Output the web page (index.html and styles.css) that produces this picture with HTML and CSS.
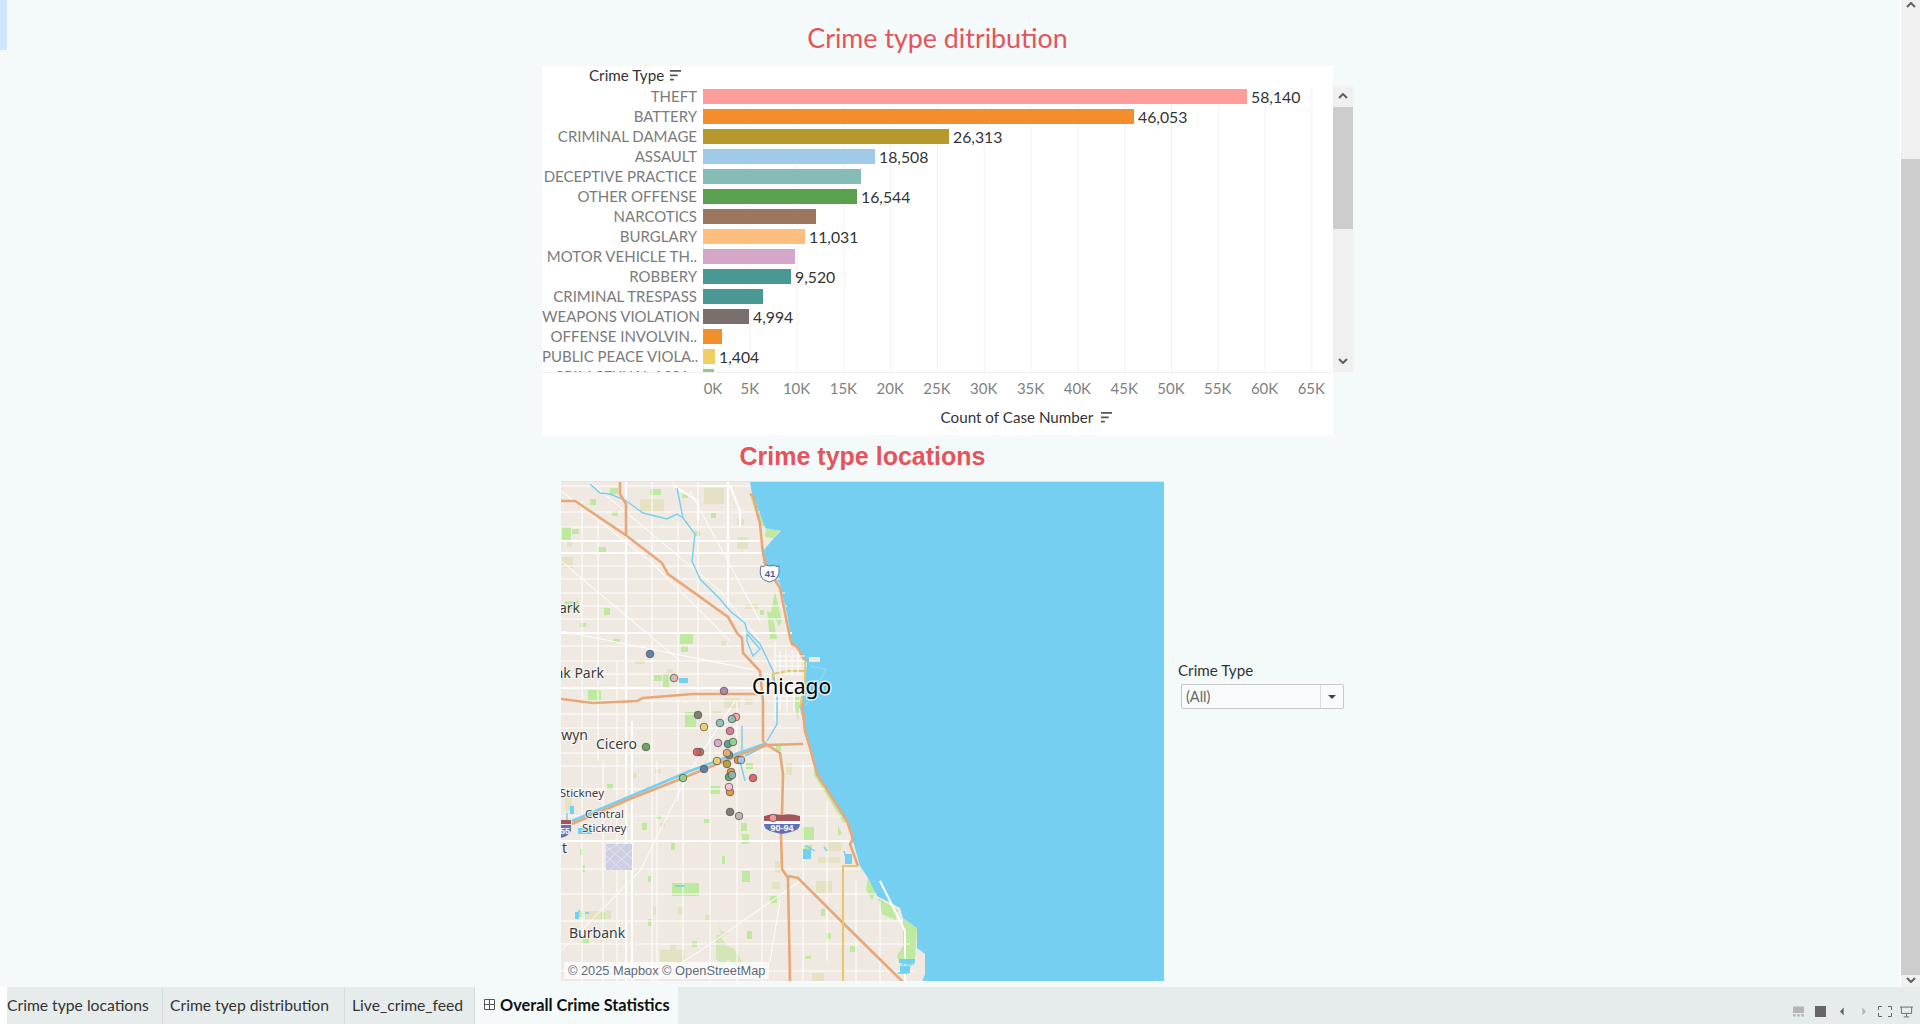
FILE: index.html
```html
<!DOCTYPE html>
<html lang="en">
<head>
<meta charset="utf-8">
<title>Overall Crime Statistics</title>
<link rel="stylesheet" href="styles.css">
</head>
<body>
<div class="main">
  <div class="content">
    <div class="accent"></div>
    <section class="chart-section">
      <h2 class="title-chart">Crime type ditribution</h2>
      <div class="chart-wrap">
        <div class="panel">
          <div class="head"><span>Crime Type</span><svg class="sort" viewBox="0 0 10 10"><path d="M0 0h10v1.6H0zM0 4h7v1.6H0zM0 8h3.5v1.6H0z"/></svg></div>
          <div class="plot">
            <div class="row"><span class="lbl">THEFT</span><span class="bar c1" style="width:544px"></span><span class="val">58,140</span></div>
            <div class="row"><span class="lbl">BATTERY</span><span class="bar c2" style="width:431px"></span><span class="val">46,053</span></div>
            <div class="row"><span class="lbl">CRIMINAL DAMAGE</span><span class="bar c3" style="width:246px"></span><span class="val">26,313</span></div>
            <div class="row"><span class="lbl">ASSAULT</span><span class="bar c4" style="width:172px"></span><span class="val">18,508</span></div>
            <div class="row"><span class="lbl">DECEPTIVE PRACTICE</span><span class="bar c5" style="width:158px"></span></div>
            <div class="row"><span class="lbl">OTHER OFFENSE</span><span class="bar c6" style="width:154px"></span><span class="val">16,544</span></div>
            <div class="row"><span class="lbl">NARCOTICS</span><span class="bar c7" style="width:113px"></span></div>
            <div class="row"><span class="lbl">BURGLARY</span><span class="bar c8" style="width:102px"></span><span class="val">11,031</span></div>
            <div class="row"><span class="lbl">MOTOR VEHICLE TH..</span><span class="bar c9" style="width:92px"></span></div>
            <div class="row"><span class="lbl">ROBBERY</span><span class="bar c10" style="width:88px"></span><span class="val">9,520</span></div>
            <div class="row"><span class="lbl">CRIMINAL TRESPASS</span><span class="bar c10" style="width:60px"></span></div>
            <div class="row"><span class="lbl">WEAPONS VIOLATION</span><span class="bar c11" style="width:46px"></span><span class="val">4,994</span></div>
            <div class="row"><span class="lbl">OFFENSE INVOLVIN..</span><span class="bar c2" style="width:19px"></span></div>
            <div class="row"><span class="lbl">PUBLIC PEACE VIOLA..</span><span class="bar c12" style="width:12px"></span><span class="val">1,404</span></div>
            <div class="row"><span class="lbl">CRIM SEXUAL ASSA..</span><span class="bar c13" style="width:11px"></span></div>
          </div>
          <div class="axis">
            <span class="tick tick-first">0K</span><span class="tick">5K</span><span class="tick">10K</span><span class="tick">15K</span><span class="tick">20K</span><span class="tick">25K</span><span class="tick">30K</span><span class="tick">35K</span><span class="tick">40K</span><span class="tick">45K</span><span class="tick">50K</span><span class="tick">55K</span><span class="tick">60K</span><span class="tick">65K</span>
          </div>
          <div class="axis-title"><span>Count of Case Number</span><svg class="sort" viewBox="0 0 10 10"><path d="M0 0h10v1.6H0zM0 4h7v1.6H0zM0 8h3.5v1.6H0z"/></svg></div>
        </div>
        <div class="vscroll">
          <svg class="chev" viewBox="0 0 10 6"><path d="M1 5l4-4 4 4"/></svg>
          <div class="vthumb"></div>
          <div class="vspace"></div>
          <svg class="chev" viewBox="0 0 10 6"><path d="M1 1l4 4 4-4"/></svg>
        </div>
      </div>
    </section>
    <section class="map-section">
      <div class="map-col">
        <h2 class="title-map">Crime type locations</h2>
        <div class="map">
          <svg class="map-svg" viewBox="561 481 603 500">
            <rect class="land" x="561" y="481" width="603" height="500"/>
            <g class="park">
              <path d="M562 526h9v13h-9zM572 528h7v5h-7zM598 546h8v7h-8zM612 510h6v5h-6zM565 600h14v8h-14zM604 607h6v7h-6zM580 622h6v4h-6zM613 638h7v4h-7zM680 632h13v11h-13zM681 645h7v6h-7zM588 689h13v11h-13zM663 672h6v14h-6zM685 711h11v15h-11zM650 488h11v6h-11zM610 487h8v6h-8zM695 530h5v5h-5zM711 512h5v5h-5zM590 498h6v6h-6zM654 674h8v6h-8zM682 493h6v4h-6zM760 609h4v5h-4zM770 612h5v5h-5z"/>
              <path d="M752 493l8 20 5 14-3 0-6-14-6-18zM766 527l14 3-7 7-8-1zM775 590l7 30-3 5-8-14zM767 610l5 2 5 26h-7zM795 690l5 2-2 28-3-14zM805 708l5 2 5 26-7-10zM815 760l32 60-3 2-30-48zM868 877l8 14-4 8-6-10zM903 917l14 10-2 30-10 20-8-22 6-10zM878 897l20 12-2 10-14-6zM838 825l4 8-4 2z"/>
              <path d="M656 814h5v4h-5zM642 822h5v7h-5zM580 788h7v7h-7zM607 783h6v6h-6zM741 822h6v8h-6zM776 745h5v5h-5zM746 762h7v6h-7zM710 785h10v8h-10zM704 818h6v4h-6zM742 833h7v10h-7zM671 842h4v7h-4zM580 848h3v6h-3zM582 864h3v7h-3zM648 875h3v6h-3zM722 855h3v8h-3zM742 870h8v11h-8zM802 826h12v14h-12zM804 844h8v5h-8zM672 882h27v13h-27zM770 895h7v7h-7zM821 908h4v7h-4zM826 932h5v6h-5zM805 955h6v3h-6zM578 910h5v6h-5zM601 911h4v7h-4zM648 918h4v7h-4zM581 937h8v5h-8zM747 930h5v8h-5zM692 940h5v6h-5zM850 945h5v6h-5zM878 843h8v24h-8z"/>
            </g>
            <path class="park-light" d="M718 922l3 8 8 2-8 4 5 8 8 4 8 12-6 6-8-8-5 8-7-8v-24h5z"/>
            <g class="tan">
              <path d="M640 498h24v14h-24zM704 487h20v16h-20zM737 536h11v12h-11zM737 518h7v6h-7zM745 603h13v5h-13zM562 556h11v11h-11zM567 541h5v5h-5zM721 640h5v5h-5zM635 659h10v4h-10zM667 668h6v4h-6zM724 697h16v10h-16zM745 698h8v6h-8zM712 710h9v4h-9zM633 772h4v5h-4zM655 768h6v4h-6zM786 762h6v12h-6zM565 796h7v14h-7zM660 822h5v4h-5zM775 860h5v12h-5zM772 881h8v7h-8zM816 880h16v12h-16zM825 840h16v10h-16zM818 856h22v6h-22zM585 910h16v8h-16zM605 910h6v8h-6zM653 906h4v8h-4zM678 906h4v8h-4zM705 914h6v6h-6zM670 944h6v6h-6zM812 972h12v9h-12zM660 949h25v12h-25z"/>
            </g>
            <path class="lake" d="M750 481L752 493L760 513L765 527L781 530L773 538L763 550L763 562L780 583L787 613L792 643L798 647L807 662L805 680L800 707L803 720L810 747L817 773L847 820L853 840L860 865L868 877L877 895L900 907L903 917L917 927L917 947L925 953L925 973L922 981L1164 981L1164 481Z"/>
            <g class="road-w">
              <path d="M561 485H750M561 511H760M561 526H765M561 565H770M561 578H780M561 592H785M561 605H787M561 618H788M561 645H790M561 660H805M561 673H805M561 700H790M561 713H800M561 727H800M561 752H810M561 765H815M561 788H825M561 815H842M561 868H860M561 893H876M561 920H903M561 943H910M561 970H915"/>
              <path d="M582 500V981M598 520V760M603 760V981M617 660V981M652 481V981M657 760V981M678 520V800M683 780V981M698 481V700M710 700V981M737 700V981M762 740V981M775 640V720M803 760V981M827 800V960M856 880V981M880 900V981"/>
              <path d="M561 490L650 560L730 640M590 481L720 590L760 640M690 490L760 620M561 560L680 660M735 700L690 770L640 870L561 950M800 880L700 950L650 981M561 630L760 670M780 900L770 960"/>
            </g>
            <g class="road-wt">
              <path d="M561 540H763M561 552H763M561 632H792M561 840H853M561 687H800"/>
              <path d="M626 481V981M632 720V981M728 481V610"/>
              <path d="M672 484L698 500V520M700 485H730L740 510V525M880 880L905 930V980"/>
            </g>
            <g class="water">
              <path d="M590 483L600 492L610 493L625 499L643 512L667 518L677 513L683 517M677 487L683 517L695 533L692 560L700 578L720 598L730 610L745 622L747 630L760 643L773 670L777 693L777 723L767 740"/>
              <path class="canal" d="M767 742L730 755L690 770L572 820"/>
              <path d="M742 725V750M740 760L745 780M765 745L745 755M567 812V820M747 633L760 648L753 655L747 640z"/>
              <path d="M806 845L815 850M844 850L847 860M824 846l3 4M675 885h10M585 912h4M578 910h2M902 963h12M898 972h10"/>
            </g>
            <path class="water-fill" d="M578 827h14v6h-14zM679 677h9v5h-9zM803 848h8v10h-8zM845 853h7v10h-7zM575 911h4v7h-4zM899 958h16v4h-16zM900 965h10v7h-10zM570 805h4v8h-4z"/>
            <path class="harbor" d="M810 665L826 668L815 690L805 705"/>
            <g class="hw">
              <path d="M620 481V493L626 503V535"/>
              <path d="M561 500H575L627 535L662 562L668 573L728 616L737 632L742 637L743 652L760 670L763 700V740L767 745"/>
              <path d="M561 698L593 702L637 700L643 697L693 693H762"/>
              <path d="M750 493L753 495L760 523L763 553L767 567L780 587L790 637L792 643L797 646L805 660M802 700L805 730L810 747L817 773L847 820L853 838L850 843L858 865"/>
              <path d="M572 823L630 798L683 777L717 763L742 753L767 744L803 743"/>
              <path d="M767 744L780 752L783 773L782 813L781 833L782 868L788 877L790 981"/>
              <path d="M788 875L798 877L843 922L903 981"/>
            </g>
            <g class="hw-y">
              <path d="M805 660V680L800 707M773 680V673L788 670H805M858 865H843V981"/>
            </g>
            <g class="grid-dt">
              <path d="M775 655h30M775 660h30M775 665h30M780 650v25M786 650v25M792 650v25M798 650v25M775 695h25M775 700h25M780 690v20M787 690v20M794 690v20"/>
            </g>
            <rect class="pier" x="809" y="656" width="11" height="5"/>
            <g class="airport">
              <path d="M606 843h26v26h-26z"/>
            </g>
            <path class="airport-lines" d="M606 845L632 867M606 855L622 869M616 843L632 858M610 869L632 849M606 862L625 843M606 850L618 843"/>
            <g class="label">
              <text class="t14" x="580" y="612" text-anchor="end">Park</text>
              <text class="t14" x="604" y="677" text-anchor="end">Oak Park</text>
              <text class="t14" x="588" y="739" text-anchor="end">Berwyn</text>
              <text class="t14" x="596" y="748">Cicero</text>
              <text class="t12" x="604" y="796" text-anchor="end">Stickney</text>
              <text class="t12" x="585" y="817">Central</text>
              <text class="t12" x="582" y="831">Stickney</text>
              <text class="t14" x="567" y="852" text-anchor="end">Summit</text>
              <text class="t14" x="569" y="937">Burbank</text>
              <text class="city" x="752" y="693">Chicago</text>
            </g>
            <path class="shield-us" d="M761 565q4 1.500 4.500-1q4 2 9 0q.5 2.500 4.500 1q1 8-2 12q-3 3-7.500 4q-5-1-7.500-4q-3-4-1-12z"/>
            <text class="shield-t" x="770" y="576" text-anchor="middle">41</text>
            <path class="i-red" d="M764 815q9-3 18-1q9-2 18 1v6h-36z"/>
            <path class="i-white" d="M764 820h36v3h-36z"/>
            <path class="i-blue" d="M764 823h36q0 5-6 7q-6 2-12 3q-6-1-12-3q-6-2-6-7z"/>
            <text class="i-t" x="782" y="829.500" text-anchor="middle">90-94</text>
            <path class="i-red" d="M561 819h10v4h-10z"/>
            <path class="i-blue" d="M561 824h10v6q-2 5-10 7z"/>
            <text class="i-t" x="565" y="833" text-anchor="middle">55</text>
            <g class="dots">
              <circle cx="650" cy="653" r="3.800" fill="#4e79a7"/>
              <circle cx="674" cy="677" r="3.800" fill="#d7b5a6"/>
              <circle cx="724" cy="690" r="3.800" fill="#b07aa1"/>
              <circle cx="698" cy="714" r="3.800" fill="#79706e"/>
              <circle cx="736" cy="716" r="3.800" fill="#ff9d9a"/>
              <circle cx="732" cy="718" r="3.800" fill="#86bcb6"/>
              <circle cx="720" cy="722" r="3.800" fill="#86bcb6"/>
              <circle cx="704" cy="726" r="3.800" fill="#f1ce63"/>
              <circle cx="730" cy="730" r="3.800" fill="#d37295"/>
              <circle cx="646" cy="746" r="3.800" fill="#59a14f"/>
              <circle cx="718" cy="742" r="3.800" fill="#d4a6c8"/>
              <circle cx="728" cy="743" r="3.800" fill="#499894"/>
              <circle cx="733" cy="741" r="3.800" fill="#8cd17d"/>
              <circle cx="700" cy="751" r="3.800" fill="#9d7660"/>
              <circle cx="697" cy="751" r="3.800" fill="#e15759"/>
              <circle cx="729" cy="754" r="3.800" fill="#499894"/>
              <circle cx="727" cy="752" r="3.800" fill="#f1ae6c"/>
              <circle cx="717" cy="760" r="3.800" fill="#f1ce63"/>
              <circle cx="727" cy="763" r="3.800" fill="#b6992d"/>
              <circle cx="738" cy="759" r="3.800" fill="#f28e2b"/>
              <circle cx="741" cy="759" r="3.800" fill="#a0cbe8"/>
              <circle cx="704" cy="768" r="3.800" fill="#4e79a7"/>
              <circle cx="683" cy="777" r="3.800" fill="#8cd17d"/>
              <circle cx="731" cy="771" r="3.800" fill="#f28e2b"/>
              <circle cx="729" cy="776" r="3.800" fill="#59a14f"/>
              <circle cx="732" cy="774" r="3.800" fill="#86bcb6"/>
              <circle cx="753" cy="777" r="3.800" fill="#e15759"/>
              <circle cx="730" cy="791" r="3.800" fill="#f28e2b"/>
              <circle cx="729" cy="786" r="3.800" fill="#fabfd2"/>
              <circle cx="730" cy="811" r="3.800" fill="#79706e"/>
              <circle cx="739" cy="815" r="3.800" fill="#bab0ac"/>
              <circle cx="773" cy="817" r="3.800" fill="#ff9d9a"/>
            </g>
          </svg>
          <div class="attribution">© 2025 Mapbox © OpenStreetMap</div>
        </div>
      </div>
      <aside class="filter">
        <div class="filter-label">Crime Type</div>
        <div class="combo"><span class="combo-val">(All)</span><span class="combo-btn"><i class="caret"></i></span></div>
      </aside>
    </section>
  </div>
  <div class="pagescroll">
    <svg class="chev chev-page" viewBox="0 0 10 6"><path d="M1 5l4-4 4 4"/></svg>
    <div class="pagespace"></div>
    <div class="pagethumb"></div>
    <svg class="chev chev-page" viewBox="0 0 10 6"><path d="M1 1l4 4 4-4"/></svg>
  </div>
</div>
<footer class="tabs">
  <div class="tab tab-1">Crime type locations</div>
  <div class="tab tab-2">Crime tyep distribution</div>
  <div class="tab tab-3">Live_crime_feed</div>
  <div class="tab tab-active">
    <svg class="tabicon" viewBox="0 0 11 11"><path d="M.5.5h10v10H.5zM5.500.5v10M.5 5.500h10"/></svg>
    <span>Overall Crime Statistics</span>
  </div>
  <div class="tools">
    <svg class="tool t-layout" viewBox="0 0 12 11"><path class="lt" d="M0 0h12v7H0zM0 8.500h3V11H0zM4.500 8.500h3V11h-3zM9 8.500h3V11H9z"/></svg>
    <svg class="tool t-single" viewBox="0 0 11 11"><path class="dk" d="M0 0h11v11H0z"/></svg>
    <svg class="tool t-prev" viewBox="0 0 5 10"><path class="dk" d="M4.500 0v10L0 5z"/></svg>
    <svg class="tool t-next" viewBox="0 0 5 10"><path class="lt" d="M.5 0v10L5 5z"/></svg>
    <svg class="tool t-full" viewBox="0 0 14 11"><path class="ol" d="M4 .5H.5V4M10 .5h3.500V4M4 10.500H.5V7M10 10.500h3.500V7"/></svg>
    <svg class="tool t-present" viewBox="0 0 14 12"><path class="ol" d="M0 .7h14M1.500.7v6.800h11V.7M7 7.500V11M4 11.300h6"/></svg>
  </div>
</footer>
</body>
</html>
```
FILE: styles.css
```css
* { box-sizing: border-box; }
html, body { margin: 0; height: 1026px; overflow: hidden; background: #fff; }
body { font-family: Lato, "Open Sans", sans-serif; color: #333; }

.main { display: flex; height: 987px; background: #f4fafa; }
.content { flex: 1; position: relative; overflow: hidden; }
.accent { position: absolute; left: 0; top: 0; width: 7px; height: 50px; background: #cde8fe; }

.chart-section { margin-left: 542px; padding-top: 20px; }
.title-chart { width: 791px; margin: 0; height: 46px; text-align: center; color: #e5535b; font: 400 26.800px/36px Lato, sans-serif; }
.chart-wrap { display: flex; align-items: flex-start; }
.panel { width: 791px; height: 369px; background: #fff; }
.head { height: 20px; padding: 0 0 2px 47px; display: flex; align-items: center; gap: 6px; font-size: 15.200px; color: #333; }
.sort { width: 11px; height: 11px; fill: #555; flex: none; }

.plot {
  height: 287px; padding: 3px 0 0 161px; overflow: hidden;
  border-bottom: 1px solid #efefef;
  background-image: linear-gradient(to right, #f2f2f2 1px, transparent 1px);
  background-size: 46.800px 100%;
  background-origin: content-box;
  background-clip: content-box;
}
.row { display: flex; align-items: center; height: 15px; margin: 0 0 5px -161px; }
.lbl { width: 161px; flex: none; padding-right: 6px; text-align: right; white-space: nowrap; color: #7b7b7b; font-size: 15px; line-height: 15px; }
.bar { display: block; height: 15px; flex: none; }
.val { margin-left: 4px; color: #333; font-size: 15.800px; line-height: 15px; white-space: nowrap; }
.c1 { background: #ff9d9a; } .c2 { background: #f28e2b; } .c3 { background: #b6992d; }
.c4 { background: #a0cbe8; } .c5 { background: #86bcb6; } .c6 { background: #59a14f; }
.c7 { background: #9d7660; } .c8 { background: #ffbe7d; } .c9 { background: #d4a6c8; }
.c10 { background: #499894; } .c11 { background: #79706e; } .c12 { background: #f1ce63; } .c13 { background: #8cd17d; }

.axis { display: grid; grid-template-columns: repeat(14, 46.800px); padding: 0 0 6px 137.600px; height: 36px; align-items: center; }
.tick { text-align: center; color: #7f7f7f; font-size: 15px; white-space: nowrap; }
.tick-first { padding-left: 20px; }
.axis-title { display: flex; align-items: center; justify-content: center; gap: 8px; height: 16px; padding-left: 178px; font-size: 15.200px; color: #333; }

.vscroll { width: 20px; height: 286px; margin-top: 20px; background: #f0f0f0; display: flex; flex-direction: column; align-items: center; }
.chev { width: 10px; height: 6px; margin: 7px 0 8px; flex: none; }
.chev path { fill: none; stroke: #606060; stroke-width: 2; }
.vthumb { width: 100%; height: 122px; background: #cdcdcd; flex: none; }
.vspace { flex: 1; }

.map-section { display: flex; margin-left: 561px; }
.map-col { width: 603px; }
.title-map { margin: 0; height: 46px; padding-top: 3px; text-align: center; color: #e5535b; font: 700 25px/36px "Liberation Sans", sans-serif; }
.map { position: relative; width: 603px; height: 500px; border-top: 1px solid #e3e3e3; overflow: hidden; }
.map-svg { display: block; width: 603px; height: 500px; }
.land { fill: #f0e9e2; }
.lake { fill: #75cff0; }
.park path { fill: #bfe8a0; }
.park-light { fill: #d3e6b8; }
.tan path { fill: #e5e2c4; }
.road-w path { fill: none; stroke: #fff; stroke-width: 1; }
.road-wt path { fill: none; stroke: #fff; stroke-width: 2; }
.grid-dt path { fill: none; stroke: #fff; stroke-width: 1; }
.water path { fill: none; stroke: #75cff0; stroke-width: 1.400; }
.water .canal { stroke-width: 2.500; }
.water-fill { fill: #75cff0; }
.harbor { fill: none; stroke: #9adcf5; stroke-width: 1; }
.pier { fill: #f3e8d6; }
.hw path { fill: none; stroke: #e6a878; stroke-width: 2.600; }
.hw-y path { fill: none; stroke: #e6c670; stroke-width: 2.200; }
.airport path { fill: #cdd0e4; }
.airport-lines { fill: none; stroke: #e4e4ee; stroke-width: 1; }
.label text { font-family: "Noto Sans", sans-serif; fill: #3c3c3c; stroke: #fff; stroke-width: 2px; stroke-opacity: .7; paint-order: stroke; }
.t14 { font-size: 14px; }
.t12 { font-size: 11.500px; }
.label .city { font-size: 21px; fill: #000; stroke: #fff; stroke-width: 3px; }
.shield-us { fill: #fff; stroke: #5a6aa8; stroke-width: 1; }
.shield-t { font: 700 9.500px "Liberation Sans", sans-serif; fill: #4a5a98; }
.i-red { fill: #a5565a; }
.i-white { fill: #fff; }
.i-blue { fill: #6272b8; }
.i-t { font: 700 9px "Liberation Sans", sans-serif; fill: #fff; }
.dots circle { stroke: #555; stroke-width: .8; fill-opacity: .9; }
.attribution { position: absolute; left: 3px; bottom: 2px; height: 17px; padding: 0 4px; background: rgba(255,255,255,.7); color: #5b6b80; font: 12.800px/17px "Liberation Sans", sans-serif; white-space: nowrap; }

.filter { margin: 225px 0 0 14px; width: 170px; }
.filter-label { height: 20px; font-size: 15.200px; line-height: 20px; color: #333; }
.combo { display: flex; width: 163px; height: 25px; margin: 4px 0 0 3px; border: 1px solid #c8c8c8; border-radius: 2px; background: #f8fbfb; }
.combo-val { flex: 1; padding-left: 4px; font-size: 14.500px; line-height: 23px; color: #666; }
.combo-btn { width: 23px; border-left: 1px solid #ddd; display: flex; align-items: center; justify-content: center; }
.caret { width: 0; height: 0; border: 4px solid transparent; border-top: 4px solid #444; border-bottom: 0; }

.pagescroll { width: 20px; background: #f0f0f0; border-left: 1px solid #fff; display: flex; flex-direction: column; }
.chev-page { align-self: center; margin: 2px 0 4px; }
.pagespace { height: 147px; flex: none; }
.pagethumb { flex: 1; background: #cdcdcd; width: 19px; }

.tabs { display: flex; height: 37px; margin-left: 7px; background: #e6ecec; font-size: 15.700px; color: #333; }
.tab { display: flex; align-items: center; padding: 0 0 2px 7px; border-right: 1px solid #d7dcdc; white-space: nowrap; }
.tab-1 { width: 156px; padding-left: 0; }
.tab-2 { width: 182px; }
.tab-3 { width: 130px; }
.tab-active { width: 203px; background: #f4fafa; font-size: 16.300px; font-weight: 700; color: #111; border-right: 0; gap: 5px; padding-left: 9px; }
.tabicon { width: 11px; height: 11px; fill: none; stroke: #555; stroke-width: 1; flex: none; }
.tools { margin-left: auto; display: flex; align-items: center; padding: 12px 7px 0 0; }
.tool { height: 11px; flex: none; }
.t-layout { width: 11px; margin-right: 11px; }
.t-single { width: 11px; margin-right: 14px; }
.t-prev { width: 4px; height: 9px; margin-right: 18px; }
.t-next { width: 4px; height: 9px; margin-right: 12px; }
.t-full { width: 14px; margin-right: 8px; }
.t-present { width: 13px; height: 12px; }
.lt { fill: #b5b5b5; }
.dk { fill: #666; }
.ol { fill: none; stroke: #666; stroke-width: 1; }
```
